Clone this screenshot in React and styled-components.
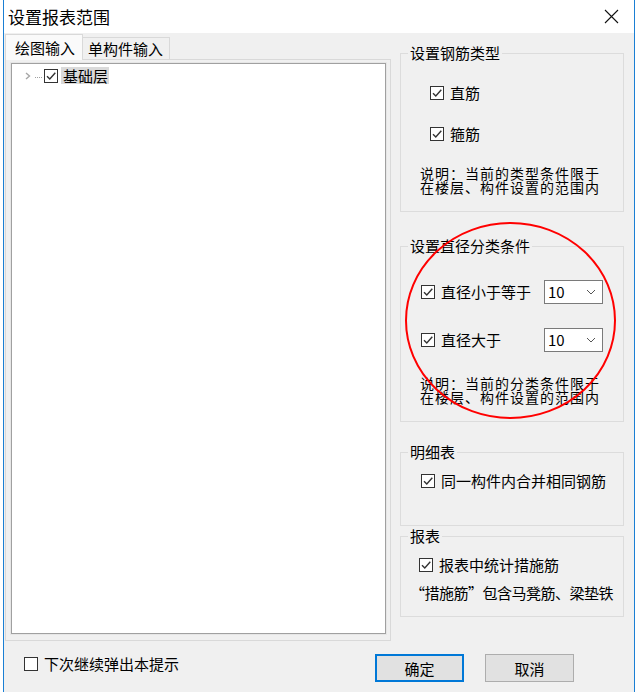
import React from 'react'
import styled, { createGlobalStyle } from 'styled-components'

const CheckBox = ({ checked }) => (
  <Sbox>
    {checked
      ? <svg width='12' height='12' viewBox='0 0 12 12'>
          <path d='M2 6.2 L4.8 9 L10.3 2.8' fill='none' stroke='#333' strokeWidth='1.4' />
        </svg>
      : null
    }
  </Sbox>
)

const Check = ({ checked = true, label, indent, top }) => (
  <ScheckRow indent={indent} top={top}>
    <CheckBox checked={checked} />
    <span>{label}</span>
  </ScheckRow>
)

const Select = ({ value }) => (
  <Sselect>
    <span>{value}</span>
    <svg width='10' height='6' viewBox='0 0 10 6'>
      <path d='M1 1 L5 5 L9 1' fill='none' stroke='#555' strokeWidth='1' />
    </svg>
  </Sselect>
)

// the two-line notes sit tight in the reference, lines almost touching
const Note = ({ lines, top }) => (
  <Snote top={top}>
    {lines.map(line => <SnoteLine key={line}>{line}</SnoteLine>)}
  </Snote>
)

const App = () => {
  return (
    <Spage>
      <GlobalStyle />
      <Swindow>
        <StitleBar>
          <span>设置报表范围</span>
          <svg width='15' height='15' viewBox='0 0 15 15'>
            <path d='M1 1 L14 14 M14 1 L1 14' stroke='#111' strokeWidth='1.1' />
          </svg>
        </StitleBar>
        <Sbody>
          <Smain>
            <SleftPane>
              <StabStrip>
                <Stab active>绘图输入</Stab>
                <Stab>单构件输入</Stab>
              </StabStrip>
              <StabPage>
                <Stree>
                  <StreeRow>
                    <svg width='6' height='8' viewBox='0 0 6 8'>
                      <path d='M1 1 L4.5 4 L1 7' fill='none' stroke='#a6a6a6' strokeWidth='1.4' />
                    </svg>
                    <Sdots />
                    <CheckBox checked />
                    <StreeLabel>基础层</StreeLabel>
                  </StreeRow>
                </Stree>
              </StabPage>
            </SleftPane>
            <SrightPane>
              <Sgroup height={167}>
                <Slegend>设置钢筋类型</Slegend>
                <Check label='直筋' indent={29} top={22} />
                <Check label='箍筋' indent={29} top={21} />
                <Note top={22} lines={['说明：当前的类型条件限于', '在楼层、构件设置的范围内']} />
              </Sgroup>
              <Sgroup height={184} top={26}>
                <Slegend>设置直径分类条件</Slegend>
                <SselectRow top={26}>
                  <Check label='直径小于等于' />
                  <Select value='10' />
                </SselectRow>
                <SselectRow top={24}>
                  <Check label='直径大于' />
                  <Select value='10' />
                </SselectRow>
                <Note top={24} lines={['说明：当前的分类条件限于', '在楼层、构件设置的范围内']} />
              </Sgroup>
              <Sgroup height={82} top={22}>
                <Slegend>明细表</Slegend>
                <Check label='同一构件内合并相同钢筋' indent={20} top={11} />
              </Sgroup>
              <Sgroup height={89} top={2}>
                <Slegend>报表</Slegend>
                <Check label='报表中统计措施筋' indent={18} top={11} />
                <Stext indent={9} top={8}>“措施筋”包含马凳筋、梁垫铁</Stext>
              </Sgroup>
            </SrightPane>
          </Smain>
          <Sfooter>
            <Check checked={false} label='下次继续弹出本提示' />
            <Sbuttons>
              <Sbutton primary>确定</Sbutton>
              <Sbutton>取消</Sbutton>
            </Sbuttons>
          </Sfooter>
        </Sbody>
      </Swindow>
      <Sannotation width='213' height='199' viewBox='0 0 213 199'>
        <ellipse cx='106.5' cy='99.5' rx='104.5' ry='97.5' fill='none' stroke='#f00' strokeWidth='2' />
      </Sannotation>
    </Spage>
  )
}

const GlobalStyle = createGlobalStyle`
  html, body {
    margin: 0;
    padding: 0;
    background: #fff;
  }
  body {
    color: #000;
    font-family: "Noto Sans CJK SC", "Noto Sans", sans-serif;
    font-size: 15px;
  }
`
const Spage = styled.div`
  height: 696px;
  overflow: hidden;
  position: relative;
  width: 638px;
`
const Swindow = styled.div`
  border-left: 1px solid #1a7fd4;
  border-right: 1px solid #1a7fd4;
  box-sizing: border-box;
  display: flex;
  flex-direction: column;
  height: 692px;
  margin-left: 3px;
  width: 632px;
`
const StitleBar = styled.div`
  align-items: center;
  background: #fff;
  display: flex;
  flex: none;
  font-size: 17px;
  height: 33px;
  justify-content: space-between;
  padding: 0 15px 0 4px;
`
const Sbody = styled.div`
  background: #f0f0f0;
  display: flex;
  flex: 1;
  flex-direction: column;
`
const Smain = styled.div`
  display: flex;
  height: 608px;
`
const SleftPane = styled.div`
  display: flex;
  flex-direction: column;
  margin-left: 1px;
  width: 386px;
`
const StabStrip = styled.div`
  align-items: flex-end;
  display: flex;
  height: 26px;
`
const Stab = styled.div`
  align-items: center;
  background: ${props => props.active ? '#fafafa' : '#f0f0f0'};
  border: 1px solid #d9d9d9;
  border-bottom: none;
  border-left: ${props => props.active ? '1px solid #d9d9d9' : 'none'};
  box-sizing: border-box;
  display: flex;
  height: ${props => props.active ? '26px' : '22px'};
  line-height: 16px;
  margin-bottom: ${props => props.active ? '-1px' : '0'};
  padding: ${props => props.active ? '0 7px 0 9px' : '0 6px 0 5px'};
  position: relative;
  z-index: ${props => props.active ? 1 : 0};
`
const StabPage = styled.div`
  border: 1px solid #d9d9d9;
  box-sizing: border-box;
  display: flex;
  height: 582px;
  padding: 3px 4px 6px 5px;
`
const Stree = styled.div`
  background: #fff;
  border: 1px solid #a0a0a0;
  box-shadow: 0 0 0 1px #e6e6e6;
  flex: 1;
`
const StreeRow = styled.div`
  align-items: center;
  display: flex;
  height: 17px;
  margin-top: 3px;
  padding-left: 13px;
`
const Sdots = styled.span`
  border-top: 1px dotted #a0a0a0;
  margin: 4px 2px 0 4px;
  width: 7px;
`
const StreeLabel = styled.span`
  background: #dadada;
  height: 17px;
  line-height: 17px;
  margin-left: 3px;
  padding: 0 1px 0 2px;
`
const SrightPane = styled.div`
  display: flex;
  flex-direction: column;
  margin-left: 9px;
  padding-top: 12px;
  width: 224px;
`
const Sgroup = styled.fieldset`
  border: 1px solid #dcdcdc;
  box-sizing: border-box;
  height: ${props => props.height}px;
  margin: ${props => props.top || 0}px 0 0;
  min-width: 0;
  padding: 0;
`
const Slegend = styled.legend`
  line-height: 16px;
  margin-left: 7px;
  padding: 0 2px;
`
const ScheckRow = styled.div`
  align-items: center;
  display: flex;
  gap: 6px;
  height: 20px;
  line-height: 20px;
  margin-left: ${props => props.indent || 0}px;
  margin-top: ${props => props.top || 0}px;
  white-space: nowrap;
`
const Sbox = styled.span`
  align-items: center;
  background: #fff;
  border: 1px solid #333;
  box-sizing: border-box;
  display: flex;
  flex: none;
  height: 14px;
  justify-content: center;
  width: 14px;
`
const SselectRow = styled.div`
  align-items: center;
  display: grid;
  grid-template-columns: 123px 59px;
  height: 24px;
  margin-left: 20px;
  margin-top: ${props => props.top}px;
`
const Sselect = styled.div`
  align-items: center;
  background: #fff;
  border: 1px solid #7a7a7a;
  box-sizing: border-box;
  display: flex;
  height: 24px;
  justify-content: space-between;
  line-height: 20px;
  padding: 0 6px 0 3px;
`
const Snote = styled.div`
  display: flex;
  flex-direction: column;
  margin-left: 19px;
  margin-top: ${props => props.top}px;
`
const SnoteLine = styled.div`
  font-size: 14px;
  height: 14px;
  letter-spacing: 1px;
  line-height: 14px;
  white-space: nowrap;
`
const Stext = styled.div`
  letter-spacing: -0.5px;
  line-height: 20px;
  margin-left: ${props => props.indent}px;
  margin-top: ${props => props.top}px;
  white-space: nowrap;
`
const Sfooter = styled.div`
  align-items: flex-start;
  display: flex;
  flex: 1;
  padding: 13px 60px 0 20px;
`
const Sbuttons = styled.div`
  display: flex;
  gap: 21px;
  margin-left: auto;
`
const Sbutton = styled.button`
  background: #e1e1e1;
  border: ${props => props.primary ? '2px solid #0078d7' : '1px solid #adadad'};
  box-sizing: border-box;
  color: #000;
  font-family: inherit;
  font-size: 15px;
  height: 28px;
  padding: 0;
  width: 89px;
`
const Sannotation = styled.svg`
  left: 404px;
  pointer-events: none;
  position: absolute;
  top: 221px;
`

export default App
